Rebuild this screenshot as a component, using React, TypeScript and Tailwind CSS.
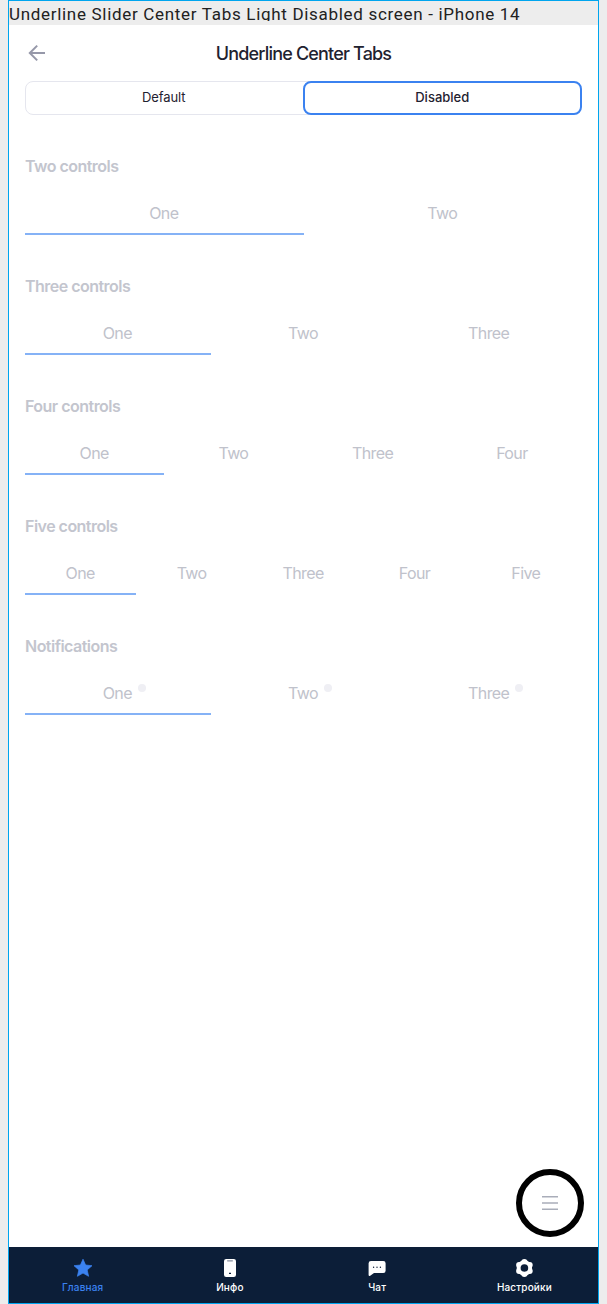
import React from "react";

interface Section {
  title: string;
  tabs: string[];
  dots?: boolean;
}

const sections: Section[] = [
  { title: "Two controls", tabs: ["One", "Two"] },
  { title: "Three controls", tabs: ["One", "Two", "Three"] },
  { title: "Four controls", tabs: ["One", "Two", "Three", "Four"] },
  { title: "Five controls", tabs: ["One", "Two", "Three", "Four", "Five"] },
  { title: "Notifications", tabs: ["One", "Two", "Three"], dots: true },
];

function TabSection({ title, tabs, dots }: Section) {
  return (
    <section className="h-[120px]">
      <h2 className="h-6 text-[16px] leading-6 font-semibold tracking-[-0.52px] text-[#c3c5ce]">{title}</h2>
      <div className="mt-[15px] flex h-[42px]">
        {tabs.map((tab, i) => (
          <div
            key={tab}
            className={
              i === 0
                ? "flex flex-1 basis-0 justify-center border-b-2 border-[#85b2f6] pt-2 pr-px"
                : "flex flex-1 basis-0 justify-center border-b-2 border-transparent pt-2 pr-px"
            }
          >
            <span className="relative h-6 text-[16px] leading-6 tracking-[-0.6px] text-[#c0c2cb]">
              {tab}
              {dots && <i className="absolute top-[3px] -right-[14px] size-2 rounded-full bg-[#efeff4]" />}
            </span>
          </div>
        ))}
      </div>
    </section>
  );
}

function StarIcon() {
  return (
    <svg width="20" height="20" viewBox="0 0 20 20" fill="currentColor">
      <path d="M10 1.200 12.600 7l6.400.7-4.800 4.200 1.400 6.400L10 15.100l-5.600 3.200 1.400-6.400L1 7.700 7.400 7Z" stroke="currentColor" strokeWidth=".7" strokeLinejoin="round" />
    </svg>
  );
}

function PhoneIcon() {
  return (
    <svg width="20" height="20" viewBox="0 0 20 20">
      <rect x="4" y="1" width="12" height="18" rx="2.2" fill="#fff" />
      <path d="M7.6 2.8h4.8" stroke="#8990a0" strokeWidth="1.2" strokeLinecap="round" />
      <path d="M9 15.4h2" stroke="#0c1e38" strokeWidth="1.2" />
    </svg>
  );
}

function ChatIcon() {
  return (
    <svg width="20" height="20" viewBox="0 0 20 20">
      <path d="M4 3h12.300a2.300 2.300 0 0 1 2.300 2.300v7.400a2.300 2.300 0 0 1-2.300 2.300H7l-3.800 2.800c-.7.5-1.600.2-1.600-.7V5.300A2.400 2.400 0 0 1 4 3Z" fill="#fff" />
      <g fill="#0c1e38">
        <circle cx="6.6" cy="9.2" r=".7" />
        <circle cx="10" cy="9.2" r=".7" />
        <circle cx="13.4" cy="9.2" r=".7" />
      </g>
    </svg>
  );
}

function GearIcon() {
  return (
    <svg width="20" height="20" viewBox="0 0 20 20">
      <g fill="#fff" transform="translate(.4 0)">
        <circle cx="10" cy="10" r="7.7" />
        <circle cx="10" cy="4" r="3" />
        <circle cx="15.300" cy="7" r="3" />
        <circle cx="15.300" cy="13" r="3" />
        <circle cx="10" cy="16" r="3" />
        <circle cx="4.700" cy="13" r="3" />
        <circle cx="4.700" cy="7" r="3" />
        <circle cx="10" cy="10" r="3.8" fill="#0c1e38" />
      </g>
    </svg>
  );
}

const nav = [
  { label: "Главная", icon: <StarIcon />, color: "text-[#3b82f0]" },
  { label: "Инфо", icon: <PhoneIcon />, color: "text-white" },
  { label: "Чат", icon: <ChatIcon />, color: "text-white" },
  { label: "Настройки", icon: <GearIcon />, color: "text-white" },
];

export default function App() {
  return (
    <div className="h-[1304px] w-[607px] bg-[#ededed] pl-2 font-['Inter',sans-serif]">
      <div className="relative flex h-[1304px] w-[591px] flex-col border border-[#00a5ee] bg-white">
        <div className="h-6 shrink-0 bg-[#ededed]">
          <div className="h-5 overflow-hidden font-['Roboto',sans-serif] text-[17px] leading-[26px] tracking-[0.69px] whitespace-nowrap text-[#212121]">
            Underline Slider Center Tabs Light Disabled screen - iPhone 14
          </div>
        </div>

        <header className="relative flex h-14 shrink-0 items-center justify-center pt-[2px]">
          <svg className="absolute top-4 left-4" width="24" height="24" viewBox="0 0 24 24" fill="none" stroke="#9698a9" strokeWidth="2">
            <path d="M20 12H5.200M12.200 4.600 4.800 12l7.400 7.400" />
          </svg>
          <h1 className="text-[18px] leading-6 font-medium tracking-[-0.82px] text-[#1f2230]">Underline Center Tabs</h1>
        </header>

        <div className="mx-4 flex h-[34px] shrink-0 rounded-[8px] text-[13px] leading-[30px] text-[#1f2230]">
          <div className="-mr-2 flex-1 basis-0 rounded-l-[8px] border border-[#e5e6ee] pr-2 text-center tracking-[-0.1px]">Default</div>
          <div className="flex flex-1 basis-0 justify-center rounded-[8px] border-2 border-[#3b82f0] bg-white leading-[28px] font-medium">
            Disabled
          </div>
        </div>

        <main className="flex-1 px-4 pt-[39px]">
          {sections.map((s) => (
            <TabSection key={s.title} {...s} />
          ))}
        </main>

        <button className="absolute top-[1168px] left-[507px] flex size-[68px] items-center justify-center rounded-full border-[6px] border-black bg-white">
          <svg width="16" height="16" viewBox="0 0 16 16" stroke="#a9adb9" strokeWidth="1.5">
            <path d="M0 1.700h16M0 8h16M0 14.300h16" />
          </svg>
        </button>

        <nav className="flex h-14 shrink-0 bg-[#0c1e38]">
          {nav.map((n) => (
            <div key={n.label} className={`flex flex-1 basis-0 flex-col items-center pt-[11px] ${n.color}`}>
              {n.icon}
              <span className="mt-px text-[10px] leading-4 font-medium tracking-[0.15px]">{n.label}</span>
            </div>
          ))}
        </nav>
      </div>
    </div>
  );
}
